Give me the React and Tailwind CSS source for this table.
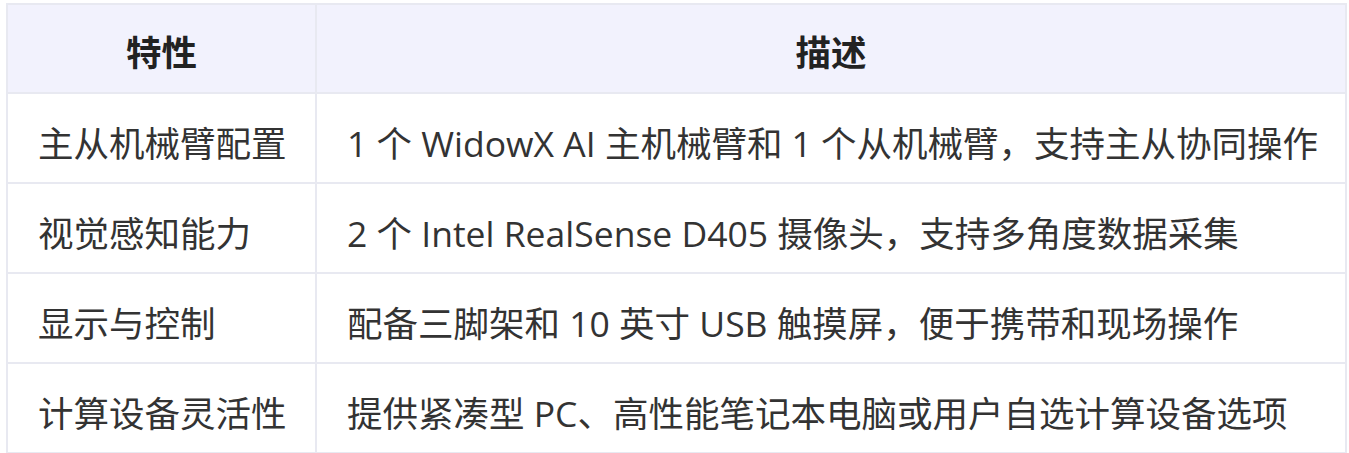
export default function App() {
  const rows = [
    ["主从机械臂配置", "1 个 WidowX AI 主机械臂和 1 个从机械臂，支持主从协同操作"],
    ["视觉感知能力", "2 个 Intel RealSense D405 摄像头，支持多角度数据采集"],
    ["显示与控制", "配备三脚架和 10 英寸 USB 触摸屏，便于携带和现场操作"],
    ["计算设备灵活性", "提供紧凑型 PC、高性能笔记本电脑或用户自选计算设备选项"],
  ];
  return (
    <div
      className="bg-white w-[1349px] h-[453px] overflow-hidden pl-[6px] pt-[3px]"
      style={{ fontFamily: '"Open Sans", "Noto Sans CJK SC", sans-serif' }}
    >
      <table className="w-[1341px] table-fixed border-collapse text-[35.5px] leading-[52px] text-[#333333]">
        <colgroup>
          <col className="w-[309px]" />
          <col />
        </colgroup>
        <thead>
          <tr className="h-[89px] bg-[#f2f2fd]">
            <th className="border-2 border-[#e8e9f1] px-[30px] pt-[6px] text-center font-bold text-[#222222]">特性</th>
            <th className="border-2 border-[#e8e9f1] px-[30px] pt-[6px] text-center font-bold text-[#222222]">描述</th>
          </tr>
        </thead>
        <tbody>
          {rows.map(([a, b]) => (
            <tr key={a} className="h-[90px]">
              <td className="border-2 border-[#e8e9f1] px-[30px] pt-[10px] whitespace-nowrap">{a}</td>
              <td className="border-2 border-[#e8e9f1] px-[30px] pt-[10px] whitespace-nowrap">{b}</td>
            </tr>
          ))}
        </tbody>
      </table>
    </div>
  );
}
